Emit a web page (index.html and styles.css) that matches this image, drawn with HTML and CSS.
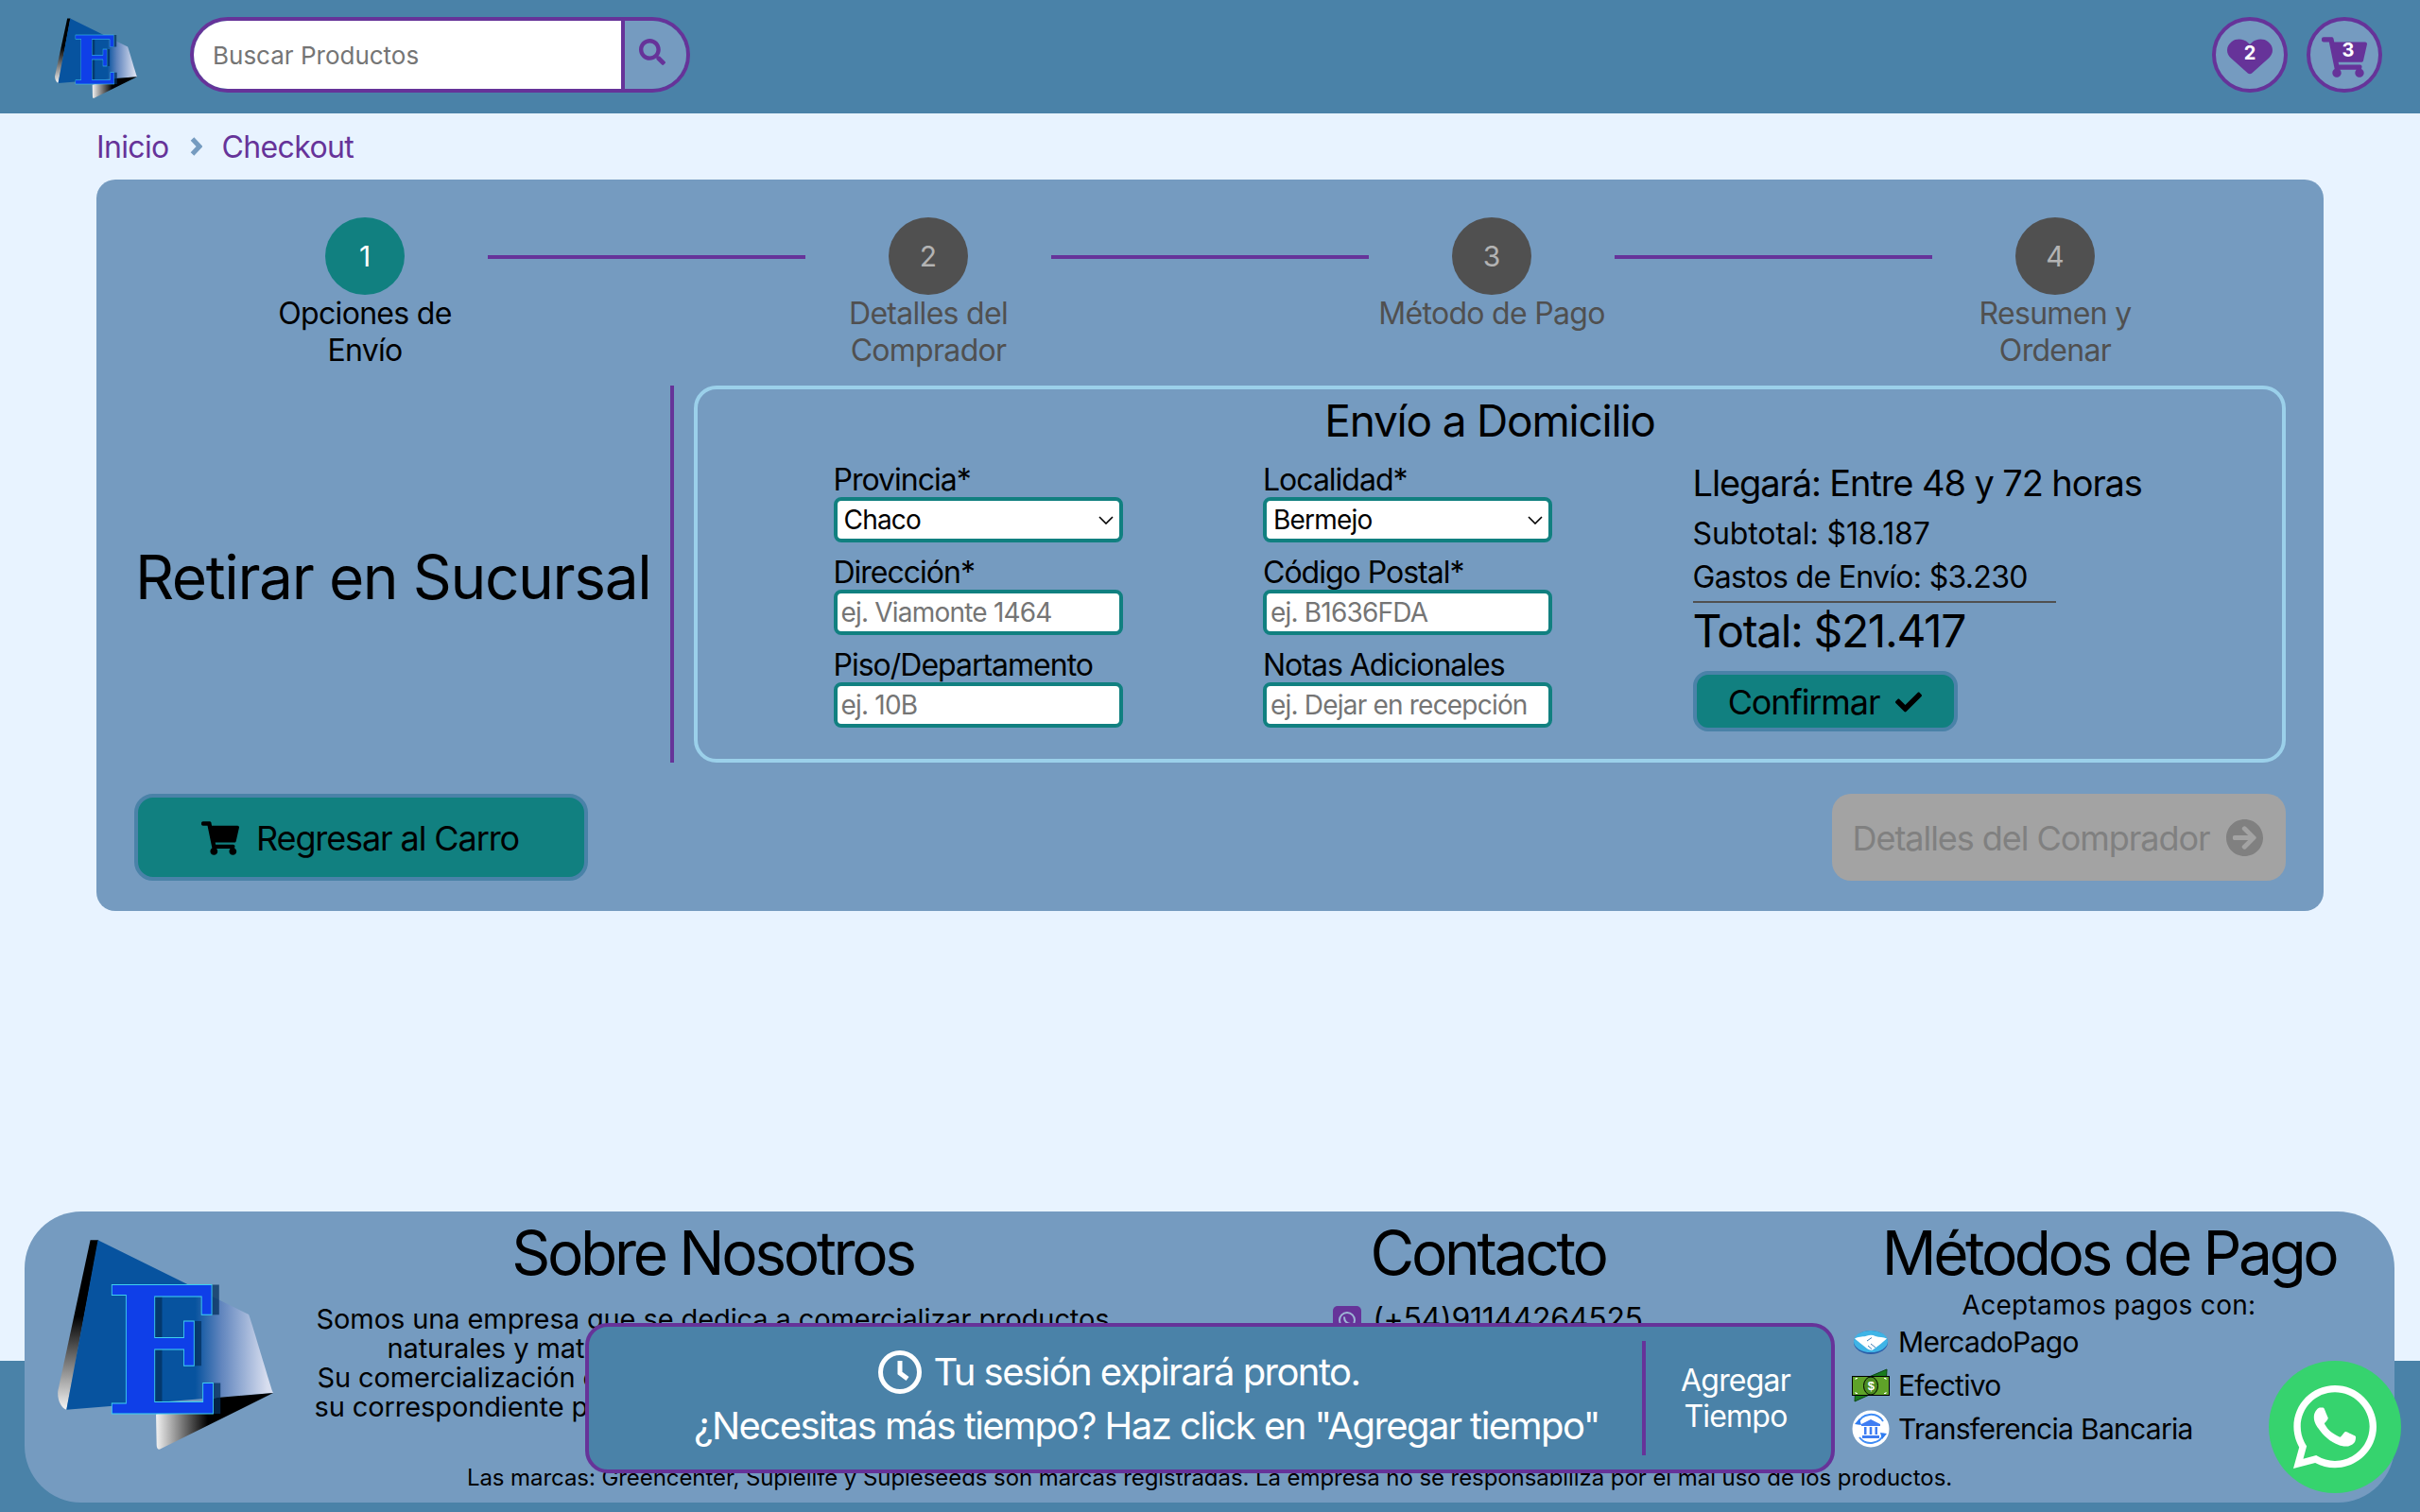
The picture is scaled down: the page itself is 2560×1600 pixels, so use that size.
FILE: index.html
```html
<!DOCTYPE html>
<html lang="es">
<head>
<meta charset="utf-8">
<title>Checkout</title>
<link rel="stylesheet" href="styles.css">
</head>
<body>
<svg class="defs" width="0" height="0" aria-hidden="true">
  <defs>
    <linearGradient id="g-sliver" x1="0" y1="0" x2="0" y2="1">
      <stop offset="0.45" stop-color="#000"/><stop offset="1" stop-color="#f4f4f4"/>
    </linearGradient>
    <linearGradient id="g-face" gradientUnits="userSpaceOnUse" x1="470" y1="0" x2="700" y2="0">
      <stop offset="0" stop-color="#07539f"/><stop offset="0.35" stop-color="#5f84bd"/><stop offset="1" stop-color="#d8deef"/>
    </linearGradient>
    <linearGradient id="g-fold" gradientUnits="userSpaceOnUse" x1="345" y1="0" x2="510" y2="0">
      <stop offset="0" stop-color="#f2f2f2"/><stop offset="1" stop-color="#000"/>
    </linearGradient>
    <symbol id="logo" viewBox="32 32 686 670">
      <path d="M136 35H162L60 575C44 570 30 545 33 515Z" fill="url(#g-sliver)"/>
      <path d="M160 35L640 272C648 290 700 470 718 522L60 575Z" fill="url(#g-face)"/>
      <path d="M345 590L540 537L718 522L356 702C350 702 347 695 347 688Z" fill="url(#g-fold)"/>
      <text class="logo-e logo-e-shade" x="205" y="587" textLength="370" lengthAdjust="spacingAndGlyphs">E</text>
      <text class="logo-e" x="182" y="587" textLength="370" lengthAdjust="spacingAndGlyphs">E</text>
    </symbol>
    <symbol id="i-cart" viewBox="0 0 576 512"><path d="M528.12 301.319l47.273-208C578.806 78.301 567.391 64 551.99 64H159.208l-9.166-44.81C147.758 8.021 137.93 0 126.529 0H24C10.745 0 0 10.745 0 24v16c0 13.255 10.745 24 24 24h69.883l70.248 343.435C147.325 417.1 136 435.222 136 456c0 30.928 25.072 56 56 56s56-25.072 56-56c0-15.674-6.447-29.835-16.824-40h209.647C430.447 426.165 424 440.326 424 456c0 30.928 25.072 56 56 56s56-25.072 56-56c0-22.172-12.888-41.332-31.579-50.405l5.517-24.276c3.413-15.018-8.002-29.319-23.403-29.319H218.117l-6.545-32h293.145c11.206 0 20.92-7.754 23.403-18.681z"/></symbol>
  </defs>
</svg>

<header class="topbar">
  <svg class="logo-small"><use href="#logo"/></svg>
  <form class="search">
    <input class="search-input" type="text" placeholder="Buscar Productos">
    <button class="search-btn" type="button" aria-label="Buscar">
      <svg class="search-icon" viewBox="0 0 512 512"><path d="M505 442.7L405.3 343c-4.5-4.5-10.6-7-17-7H372c27.6-35.3 44-79.7 44-128C416 93.1 322.9 0 208 0S0 93.1 0 208s93.1 208 208 208c48.3 0 92.7-16.4 128-44v16.3c0 6.4 2.5 12.5 7 17l99.7 99.7c9.4 9.4 24.6 9.4 33.9 0l28.3-28.3c9.4-9.4 9.4-24.6.1-34zM208 336c-70.7 0-128-57.2-128-128 0-70.7 57.2-128 128-128 70.7 0 128 57.2 128 128 0 70.7-57.2 128-128 128z"/></svg>
    </button>
  </form>
  <div class="top-actions">
    <a class="round-action">
      <svg class="heart-icon" viewBox="0 0 512 512" preserveAspectRatio="none"><path d="M462.3 62.6C407.5 15.9 326 24.3 275.7 76.2L256 96.5l-19.7-20.3C186.1 24.3 104.5 15.9 49.7 62.6c-62.8 53.6-66.1 149.8-9.9 207.9l193.5 199.8c12.5 12.9 32.8 12.9 45.3 0l193.5-199.8c56.3-58.1 53-154.3-9.8-207.9z"/></svg>
      <span class="count count-heart">2</span>
    </a>
    <a class="round-action">
      <svg class="top-cart-icon"><use href="#i-cart"/></svg>
      <span class="count count-cart">3</span>
    </a>
  </div>
</header>

<nav class="crumbs">
  <a class="crumb">Inicio</a>
  <svg class="crumb-sep" viewBox="0 0 13 20"><path d="M2.500 2L10 10L2.500 18"/></svg>
  <a class="crumb">Checkout</a>
</nav>

<main class="card">
  <ol class="stepper">
    <li class="step step-active"><span class="step-dot">1</span><span class="step-label">Opciones de Envío</span></li>
    <li class="step-line"></li>
    <li class="step"><span class="step-dot">2</span><span class="step-label">Detalles del Comprador</span></li>
    <li class="step-line"></li>
    <li class="step"><span class="step-dot">3</span><span class="step-label">Método de Pago</span></li>
    <li class="step-line"></li>
    <li class="step"><span class="step-dot">4</span><span class="step-label">Resumen y Ordenar</span></li>
  </ol>

  <section class="shipping">
    <h2 class="pickup">Retirar en Sucursal</h2>
    <div class="shipping-rule"></div>
    <div class="delivery">
      <h3 class="delivery-title">Envío a Domicilio</h3>
      <div class="delivery-body">
        <form class="fields">
          <label class="field"><span class="field-label">Provincia*</span>
            <select class="control control-select"><option>Chaco</option></select></label>
          <label class="field"><span class="field-label">Localidad*</span>
            <select class="control control-select"><option>Bermejo</option></select></label>
          <label class="field"><span class="field-label">Dirección*</span>
            <input class="control" type="text" placeholder="ej. Viamonte 1464"></label>
          <label class="field"><span class="field-label">Código Postal*</span>
            <input class="control" type="text" placeholder="ej. B1636FDA"></label>
          <label class="field"><span class="field-label">Piso/Departamento</span>
            <input class="control" type="text" placeholder="ej. 10B"></label>
          <label class="field"><span class="field-label">Notas Adicionales</span>
            <input class="control" type="text" placeholder="ej. Dejar en recepción"></label>
        </form>
        <div class="summary">
          <p class="arrival">Llegará: Entre 48 y 72 horas</p>
          <p class="sum-line sum-first">Subtotal: $18.187</p>
          <p class="sum-line">Gastos de Envío: $3.230</p>
          <hr class="sum-rule">
          <p class="sum-total">Total: $21.417</p>
          <button class="btn btn-confirm" type="button">Confirmar
            <svg class="confirm-icon" viewBox="0 0 512 512"><path d="M173.898 439.404l-166.4-166.4c-9.997-9.997-9.997-26.206 0-36.204l36.203-36.204c9.997-9.998 26.207-9.998 36.204 0L192 312.69 432.095 72.596c9.997-9.997 26.207-9.997 36.204 0l36.203 36.204c9.997 9.997 9.997 26.206 0 36.204l-294.4 294.401c-9.998 9.997-26.207 9.997-36.204-.001z"/></svg>
          </button>
        </div>
      </div>
    </div>
  </section>

  <div class="card-actions">
    <button class="btn btn-back" type="button">
      <svg class="back-icon"><use href="#i-cart"/></svg>
      Regresar al Carro
    </button>
    <button class="btn btn-next" type="button" disabled>Detalles del Comprador
      <svg class="next-icon" viewBox="8 8 496 496"><path d="M256 8c137 0 248 111 248 248S393 504 256 504 8 393 8 256 119 8 256 8zm-28.9 143.6l75.5 72.4H120c-13.3 0-24 10.7-24 24v16c0 13.3 10.7 24 24 24h182.6l-75.5 72.4c-9.7 9.3-9.9 24.8-.4 34.3l11 10.9c9.4 9.4 24.6 9.4 33.9 0L404.3 273c9.4-9.4 9.4-24.6 0-33.9L271.6 106.3c-9.4-9.4-24.6-9.4-33.9 0l-11 10.9c-9.5 9.6-9.3 25.1.4 34.4z"/></svg>
    </button>
  </div>
</main>

<footer class="site-footer">
  <div class="footer-card">
    <div class="footer-cols">
      <svg class="logo-large"><use href="#logo"/></svg>
      <section class="about">
        <h2 class="footer-title">Sobre Nosotros</h2>
        <p class="about-text">Somos una empresa que se dedica a comercializar productos<br>naturales y materiales para cuidado de las plantas.<br>Su comercialización está destinada a quienes ya cuenten con<br>su correspondiente permiso para la actividad legal del cultivo.</p>
      </section>
      <section class="contact">
        <h2 class="footer-title">Contacto</h2>
        <p class="contact-row">
          <svg class="contact-icon" viewBox="0 0 30 30"><rect width="30" height="30" rx="5" fill="#663399"/><circle cx="15" cy="15" r="8" fill="none" stroke="#9db5d6" stroke-width="2"/><path d="M12 11.500C12 16 14 18.500 18.500 19" fill="none" stroke="#9db5d6" stroke-width="2"/></svg>
          (+54)91144264525</p>
      </section>
      <section class="payments">
        <h2 class="footer-title footer-title-pay">Métodos de Pago</h2>
        <p class="payments-intro">Aceptamos pagos con:</p>
        <ul class="pay-list">
          <li class="pay-item">
            <svg class="pay-icon" viewBox="0 0 40 40">
              <ellipse cx="20" cy="20.500" rx="18" ry="12.500" fill="#2b5ea8"/>
              <ellipse cx="20" cy="19.500" rx="18" ry="11.500" fill="#3fb4e6"/>
              <path d="M3 16.500C9 13.500 12 15 16 13.500C19 12.500 22 12.500 25 14C29 15.500 33 14.500 37 16.500L30 22.500L22 28.500C20 29 18 28.500 16 27L9 21.500Z" fill="#fff"/>
              <path d="M16 19L21 15.500M20 22L25 26M17 24L21 27.500" stroke="#3f7fb5" stroke-width="1" fill="none"/>
            </svg>MercadoPago</li>
          <li class="pay-item">
            <svg class="pay-icon" viewBox="0 0 40 40">
              <path d="M3 37L36 22L37 3L4 17Z" fill="#1a7a1f" stroke="#0b4a10" stroke-width="1"/>
              <rect x="0.500" y="10.500" width="39" height="20" fill="#5fa329" stroke="#000" stroke-width="1"/>
              <ellipse cx="20" cy="20.500" rx="7.500" ry="9.500" fill="#4c8d22" stroke="#000" stroke-width="1"/>
              <path d="M4 14V12.500H6M36 14V12.500H34M4 27V28.500H6M36 27V28.500H34" stroke="#fff" stroke-width="1" fill="none"/>
              <text class="cash-mark" x="20" y="25">$</text>
            </svg>Efectivo</li>
          <li class="pay-item">
            <svg class="pay-icon" viewBox="0 0 40 40">
              <circle cx="20" cy="20" r="19.500" fill="#fff"/>
              <path d="M6 15A15 15 0 0 1 33 12M34 25A15 15 0 0 1 8 29" stroke="#3f8cf5" stroke-width="2" fill="none"/>
              <path d="M3 15L8 9L10 16ZM37 25L32 31L30 24Z" fill="#2f7cf0"/>
              <path d="M20 10L30 15V17H10V15ZM11 27H29V30H11ZM13 18H15.500V26H13ZM18.700 18H21.300V26H18.700ZM24.500 18H27V26H24.500Z" fill="#3f7df2"/>
            </svg>Transferencia Bancaria</li>
        </ul>
      </section>
    </div>
    <p class="legal">Las marcas: Greencenter, Suplelife y Supleseeds son marcas registradas. La empresa no se responsabiliza por el mal uso de los productos.</p>
  </div>
</footer>

<aside class="session-toast">
  <div class="toast-msg">
    <p class="toast-line toast-head">
      <svg class="clock-icon" viewBox="0 0 46 46"><circle cx="23" cy="23" r="20.500"/><path d="M23 11V24L31 30"/></svg>
      Tu sesión expirará pronto.
    </p>
    <p class="toast-line">¿Necesitas más tiempo? Haz click en "Agregar tiempo"</p>
  </div>
  <button class="toast-add" type="button">Agregar Tiempo</button>
</aside>

<a class="whatsapp" aria-label="WhatsApp">
  <svg class="whatsapp-icon" viewBox="0 32 448 448"><path d="M380.9 97.1C339 55.1 283.2 32 223.9 32c-122.4 0-222 99.6-222 222 0 39.1 10.2 77.3 29.6 111L0 480l117.7-30.9c32.4 17.7 68.9 27 106.1 27h.1c122.3 0 224.1-99.6 224.1-222 0-59.3-25.2-115-67.1-157zm-157 341.6c-33.2 0-65.7-8.9-94-25.7l-6.7-4-69.8 18.3L72 359.2l-4.4-7c-18.5-29.4-28.2-63.3-28.2-98.2 0-101.7 82.8-184.5 184.6-184.5 49.3 0 95.6 19.2 130.4 54.1 34.8 34.9 56.2 81.2 56.1 130.5 0 101.8-84.9 184.6-186.6 184.6zm101.2-138.2c-5.5-2.8-32.8-16.2-37.9-18-5.1-1.9-8.8-2.8-12.5 2.8-3.7 5.6-14.3 18-17.6 21.8-3.2 3.7-6.5 4.2-12 1.4-32.6-16.3-54-29.1-75.5-66-5.7-9.8 5.7-9.1 16.3-30.3 1.8-3.7.9-6.9-.5-9.7-1.4-2.8-12.5-30.1-17.1-41.2-4.5-10.8-9.1-9.3-12.5-9.5-3.2-.2-6.9-.2-10.6-.2-3.7 0-9.7 1.4-14.8 6.9-5.1 5.6-19.4 19-19.4 46.3 0 27.3 19.9 53.7 22.6 57.4 2.8 3.7 39.1 59.7 94.8 83.8 35.2 15.2 49 16.5 66.6 13.9 10.7-1.6 32.8-13.4 37.4-26.4 4.6-13 4.6-24.1 3.2-26.4-1.3-2.5-5-3.9-10.5-6.6z"/></svg>
</a>
</body>
</html>
```

FILE: styles.css
```css
* { box-sizing: border-box; }
html, body { margin: 0; height: 1600px; overflow: hidden; }
body {
  display: flex; flex-direction: column; position: relative;
  background: #e8f3ff; color: #000;
  font-family: Inter, "Noto Sans", sans-serif;
}
p, h2, h3, ol, ul { margin: 0; padding: 0; font-weight: 400; list-style: none; }
button, input, select { font-family: inherit; }
.defs { position: absolute; }

.logo-e { font-family: "DejaVu Serif", serif; font-weight: 700; font-size: 565px; fill: #0f3fe8; stroke: #3fd0f0; stroke-width: 3px; }
.logo-e-shade { fill: #04305e; fill-opacity: 0.75; stroke: none; }

/* header */
.topbar { flex: none; height: 120px; background: #4a82a8; display: flex; align-items: center; padding: 0 40px 4px 58px; }
.logo-small { width: 87px; height: 85px; flex: none; margin-top: 7px; }
.search { display: flex; width: 529px; height: 80px; margin-left: 56px; border: 4px solid #663399; border-radius: 40px; overflow: hidden; }
.search-input { flex: 1; min-width: 0; border: 0; padding: 0 0 0 20px; font-size: 26px; background: #fff; outline: none; }
.search-input::placeholder { color: #757575; opacity: 1; }
.search-btn { flex: none; width: 69px; border: 0; border-left: 4px solid #663399; background: #759bc0; padding: 0 0 6px 15px; display: flex; align-items: center; justify-content: flex-start; }
.search-icon { width: 28px; height: 28px; fill: #663399; }
.top-actions { margin-left: auto; display: flex; gap: 20px; }
.round-action { position: relative; width: 80px; height: 80px; border: 4px solid #663399; border-radius: 50%; background: #759bc0; display: flex; align-items: center; justify-content: center; }
.heart-icon { width: 48px; height: 42px; fill: #663399; margin-top: 4px; }
.top-cart-icon { width: 48px; height: 43px; fill: #663399; margin-top: 4px; }
.count { position: absolute; color: #fff; font-weight: 700; font-size: 20px; line-height: 24px; left: 0; right: 0; text-align: center; }
.count-heart { top: 22px; }
.count-cart { top: 19px; left: 8px; }

/* breadcrumb */
.crumbs { flex: none; height: 70px; padding: 0 102px; display: flex; align-items: center; }
.crumb { font-size: 32px; letter-spacing: -0.65px; color: #663399; }
.crumb-sep { width: 13px; height: 20px; margin: 0 21px 0 22px; fill: none; stroke: #759bc0; stroke-width: 5; }

/* main card */
.card { flex: none; margin: 0 102px; height: 774px; background: #759bc0; border-radius: 20px; padding: 40px 40px 32px; }
.stepper { display: flex; padding: 0 114px; }
.step { flex: none; width: 260px; display: flex; flex-direction: column; align-items: center; color: #505050; }
.step-dot { width: 84px; height: 82px; border-radius: 50%; background: #505050; color: #b3b3b3; display: flex; align-items: center; justify-content: center; font-size: 30px; }
.step-label { font-size: 32px; line-height: 39px; letter-spacing: -0.7px; text-align: center; }
.step-active { color: #000; }
.step-active .step-dot { background: #118080; color: #fff; }
.step-line { flex: 1; height: 4px; background: #663399; margin-top: 40px; }

.shipping { display: flex; margin-top: 18px; height: 399px; }
.pickup { flex: none; width: 567px; padding: 0 0 0 1px; font-size: 64px; line-height: 406px; letter-spacing: -1.4px; white-space: nowrap; }
.shipping-rule { flex: none; width: 4px; background: #663399; }
.delivery { flex: none; margin-left: 21px; width: 1684px; border: 4px solid #9bd0ea; border-radius: 24px; }
.delivery-title { font-size: 46px; line-height: 66px; margin-bottom: -2px; letter-spacing: -1.2px; text-align: center; }
.delivery-body { display: flex; padding-left: 143.5px; }
.fields { display: grid; grid-template-columns: 306px 306px; column-gap: 148.5px; grid-auto-rows: 98px; }
.field { display: block; }
.field-label { display: block; height: 50px; font-size: 32px; line-height: 64px; letter-spacing: -1px; }
.control { display: block; width: 306px; height: 48px; border: 4px solid #118080; border-radius: 8px; background: #fff; font-size: 28px; letter-spacing: -0.8px; padding: 0 4px; color: #000; outline: none; }
.control::placeholder { color: #757575; opacity: 1; }
.control-select {
  appearance: none; padding-left: 7px;
  background-image: url("data:image/svg+xml,%3Csvg xmlns='http://www.w3.org/2000/svg' viewBox='0 0 16 9'%3E%3Cpath d='M1 1L8 8L15 1' fill='none' stroke='%23000' stroke-width='1.6'/%3E%3C/svg%3E");
  background-repeat: no-repeat; background-size: 16px 9px; background-position: right 6px center;
}
.summary { margin-left: 148.5px; }
.arrival { font-size: 38px; line-height: 50px; letter-spacing: -1.1px; margin-top: 10px; white-space: nowrap; }
.sum-line { font-size: 32px; line-height: 47px; letter-spacing: -0.7px; }
.sum-first { margin-top: 5px; margin-bottom: -1px; letter-spacing: -0.1px; }
.sum-rule { width: 384px; height: 2px; border: 0; background: #505050; margin: 2px 0 0; }
.sum-total { font-size: 48px; line-height: 60px; letter-spacing: -1.4px; }

.btn { display: flex; align-items: center; justify-content: center; font-size: 36px; letter-spacing: -1.1px; color: #000; padding-top: 2px; }
.btn-confirm { margin-top: 12px; width: 280px; height: 64px; gap: 17px; background: #118080; border: 4px solid #4a82a8; border-radius: 16px; }
.confirm-icon { width: 28px; height: 28px; }
.card-actions { display: flex; justify-content: space-between; margin-top: 33px; }
.btn-back { width: 480px; height: 92px; gap: 18px; padding-left: 4px; background: #118080; border: 4px solid #4a82a8; border-radius: 20px; }
.back-icon { width: 40px; height: 36px; }
.btn-next { width: 480px; height: 92px; gap: 18px; padding-left: 4px; letter-spacing: -1.05px; background: #a3a3a3; border: 0; border-radius: 20px; color: #808080; }
.next-icon { width: 39px; height: 39px; fill: #808080; }

/* footer */
.site-footer { margin-top: auto; height: 318px; padding: 0 27px 10px 26px; background: linear-gradient(#e8f3ff 158px, #4a82a8 158px); }
.footer-card { height: 308px; background: #759bc0; border-radius: 60px; display: flex; flex-direction: column; }
.footer-cols { display: flex; flex: 1; padding-left: 35px; }
.logo-large { flex: none; width: 228px; height: 223px; margin-top: 29px; }
.about { flex: none; width: 860px; margin: 0 40px 0 35px; text-align: center; }
.contact { flex: none; width: 700px; margin-right: 35px; text-align: center; }
.payments { flex: none; width: 544px; }
.footer-title { font-size: 64px; line-height: 88px; letter-spacing: -3.3px; text-align: center; white-space: nowrap; }
.footer-title-pay { letter-spacing: -3.45px; }
.about-text { font-size: 29px; line-height: 31px; letter-spacing: -0.1px; margin-top: 10px; white-space: nowrap; }
.contact-row { display: flex; align-items: flex-start; justify-content: center; font-size: 32px; letter-spacing: -0.3px; line-height: 36px; margin-top: 8px; gap: 12px; }
.contact-icon { width: 30px; height: 30px; margin-top: 4px; flex: none; }
.payments-intro { font-size: 28px; letter-spacing: 0.3px; line-height: 36px; margin-top: -7px; text-align: center; }
.pay-list { margin-top: -2px; }
.pay-item { display: flex; align-items: center; gap: 9px; height: 46px; font-size: 30px; letter-spacing: -0.7px; white-space: nowrap; }
.pay-icon { width: 40px; height: 40px; flex: none; }
.cash-mark { font-family: "Liberation Sans", sans-serif; font-size: 13px; font-weight: 700; fill: #fff; text-anchor: middle; }
.legal { font-size: 24px; letter-spacing: -0.07px; line-height: 30px; text-align: center; padding-bottom: 11px; white-space: nowrap; }

/* overlays */
.session-toast { position: absolute; left: 619px; top: 1400px; width: 1322px; height: 159px; background: #4a82a8; border: 4px solid #663399; border-radius: 24px; color: #fff; display: flex; padding: 15px 0; }
.toast-msg { flex: none; width: 1114px; padding-left: 66px; display: flex; flex-direction: column; align-items: center; justify-content: center; gap: 12px; }
.toast-line { font-size: 40px; line-height: 44px; letter-spacing: -1.55px; display: flex; align-items: center; gap: 12px; white-space: nowrap; }
.toast-head { margin-right: 58px; }
.clock-icon { width: 46px; height: 46px; fill: none; stroke: #fff; stroke-width: 5; }
.toast-add { flex: 1; border: 0; border-left: 4px solid #663399; background: none; color: #fff; font-size: 32px; letter-spacing: -0.8px; line-height: 38px; padding: 0 36px 0 30px; }
.whatsapp { position: absolute; left: 2400px; top: 1440px; width: 140px; height: 140px; border-radius: 50%; background: #36d36e; display: flex; align-items: center; justify-content: center; }
.whatsapp-icon { width: 88px; height: 88px; fill: #fff; }
```
